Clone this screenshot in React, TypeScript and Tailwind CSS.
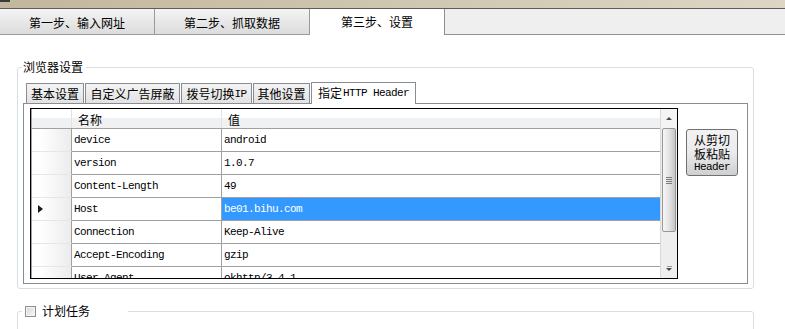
import React from 'react';

const cjk = "font-['Noto_Sans_CJK_SC',sans-serif]";
const mono = "font-['Liberation_Mono','Noto_Sans_CJK_SC',monospace] text-[11px] tracking-[-0.6px]";

const rows = [
  { name: 'device', value: 'android' },
  { name: 'version', value: '1.0.7' },
  { name: 'Content-Length', value: '49' },
  { name: 'Host', value: 'be01.bihu.com', selected: true },
  { name: 'Connection', value: 'Keep-Alive' },
  { name: 'Accept-Encoding', value: 'gzip' },
  { name: 'User-Agent', value: 'okhttp/3.4.1' },
];

const innerTabs = [
  { label: <>基本设置</>, w: 'w-[58px]' },
  { label: <>自定义广告屏蔽</>, w: 'w-[95px]' },
  { label: <>拨号切换<span className={mono}>IP</span></>, w: 'w-[71px]' },
  { label: <>其他设置</>, w: 'w-[57px]' },
];

const App: React.FC = () => {
  return (
    <div className={`w-[785px] h-[329px] overflow-hidden bg-white text-[12px] leading-[14px] text-black ${cjk}`}>
      {/* title strip */}
      <div className="h-[8px] flex bg-gradient-to-r from-[#c2b79d] to-[#ddd6c4]">
        <div className="w-[10px] h-[2px] bg-[#3a3a3a]" />
      </div>

      {/* main tabs */}
      <div className="flex h-[27px] border-t border-[#5c5c5c]">
        <div className="w-[155px] flex items-center justify-center pt-[3px] border-r border-b border-[#9a9a9a] bg-gradient-to-b from-[#f4f4f4] to-[#dcdcdc]">
          第一步、输入网址
        </div>
        <div className="w-[155px] flex items-center justify-center pt-[3px] border-r border-b border-[#9a9a9a] bg-gradient-to-b from-[#f4f4f4] to-[#dcdcdc]">
          第二步、抓取数据
        </div>
        <div className="w-[135px] flex items-center justify-center pb-[1px] bg-white border-r border-[#8f8f9a]">
          第三步、设置
        </div>
        <div className="flex-1 bg-[#efefef] border-b border-[#8f8f9a]" />
      </div>

      {/* browser settings group */}
      <fieldset className="ml-[17px] mt-[25px] w-[737px] border border-[#d5dfe5] rounded-[3px]">
        <legend className="ml-[4px] px-[1px] pr-[3px] leading-[14px]">浏览器设置</legend>

        <div className="mt-[8px] ml-[8px] h-[21px] flex items-end gap-[1px]">
          {innerTabs.map((t, i) => (
            <div
              key={i}
              className={`${t.w} h-[20px] flex items-center justify-center border-t border-x border-[#898c95] bg-gradient-to-b from-[#f4f4f4] to-[#e2e2e2]`}
            >
              {t.label}
            </div>
          ))}
          <div className="relative z-10 w-[105px] h-[22px] -mb-px flex items-center justify-center pb-[1px] bg-white border-t border-x border-[#898c95]">
            指定<span className={`${mono} ml-[1px]`}>HTTP Header</span>
          </div>
        </div>

        <div className="ml-[5px] mb-[4px] w-[725px] h-[181px] border border-[#898c95] pl-[6px] pt-[4px] flex items-start">
          {/* data grid */}
          <div className="w-[648px] h-[171px] border border-black flex overflow-hidden">
            <div className="flex-1 border-l border-[#a0a0a0] flex flex-col overflow-hidden">
              <div className="h-[20px] shrink-0 flex border-b border-[#a0a0a0] bg-gradient-to-b from-white from-45% to-[#f0f1f2] to-45%">
                <div className="w-[40px] border-r border-[#e2e2e2]" />
                <div className="w-[150px] pl-[6px] flex items-center pt-[2px] border-r border-[#e2e2e2]">名称</div>
                <div className="flex-1 pl-[6px] flex items-center pt-[2px]">值</div>
              </div>
              {rows.map((r) => (
                <div key={r.name} className="h-[23px] shrink-0 flex">
                  <div className="w-[40px] flex items-center pl-[6px] border-r border-b border-r-[#a0a0a0] border-b-[#e6e6e6] bg-gradient-to-r from-white from-20% to-[#ececec]">
                    {r.selected && (
                      <div className="w-0 h-0 border-y-[4px] border-y-transparent border-l-[5px] border-l-[#1a1a1a]" />
                    )}
                  </div>
                  <div className={`w-[150px] pl-[2px] flex items-center border-r border-b border-[#a0a0a0] ${mono}`}>
                    {r.name}
                  </div>
                  <div
                    className={`flex-1 pl-[2px] flex items-center border-b border-[#a0a0a0] ${mono} ${
                      r.selected ? 'bg-[#3399ff] text-white' : ''
                    }`}
                  >
                    {r.value}
                  </div>
                </div>
              ))}
            </div>

            {/* vertical scrollbar */}
            <div className="w-[17px] flex flex-col bg-[#eeeeee] border-l border-[#d9d9d9]">
              <div className="h-[19px] shrink-0 flex items-center justify-center bg-[#f4f4f4]">
                <div className="w-0 h-0 border-x-[3px] border-x-transparent border-b-[3px] border-b-[#4a4a4a]" />
              </div>
              <div className="h-[104px] shrink-0 mx-[1px] rounded-[2px] border border-[#979797] bg-gradient-to-r from-[#f6f6f6] via-[#e4e4e4] to-[#c6c6c6] flex flex-col items-center justify-center gap-[1px]">
                <div className="w-[6px] h-px bg-[#7a7a7a]" />
                <div className="w-[6px] h-px bg-[#7a7a7a]" />
                <div className="w-[6px] h-px bg-[#7a7a7a]" />
                <div className="w-[6px] h-px bg-[#7a7a7a]" />
              </div>
              <div className="flex-1" />
              <div className="h-[19px] shrink-0 flex flex-col items-center justify-center gap-[1px]">
                <div className="w-[5px] h-px bg-[#9a9a9a]" />
                <div className="w-0 h-0 border-x-[3px] border-x-transparent border-t-[3px] border-t-[#4a4a4a]" />
              </div>
            </div>
          </div>

          {/* paste button */}
          <button className="ml-[8px] mt-[21px] w-[52px] h-[47px] rounded-[3px] border border-[#707070] bg-gradient-to-b from-[#f2f2f2] via-[#ebebeb] via-50% to-[#cfcfcf] flex flex-col items-center justify-center leading-[14px]">
            <span>从剪切</span>
            <span>板粘贴</span>
            <span className={`${mono} leading-[12px]`}>Header</span>
          </button>
        </div>
      </fieldset>

      {/* scheduled task group */}
      <fieldset className="ml-[17px] mt-[15px] w-[737px] h-[40px] border border-[#d5dfe5] rounded-[3px]">
        <legend className="ml-[4px] w-[106px] pl-[3px] flex items-center gap-[6px] leading-[14px]">
          <span className="w-[11px] h-[11px] border border-[#8e8f8f] bg-gradient-to-br from-[#d8d8d8] to-[#f8f8f8] shadow-[inset_0_0_0_1px_#f4f4f4]" />
          <span>计划任务</span>
        </legend>
      </fieldset>
    </div>
  );
};

export default App;
